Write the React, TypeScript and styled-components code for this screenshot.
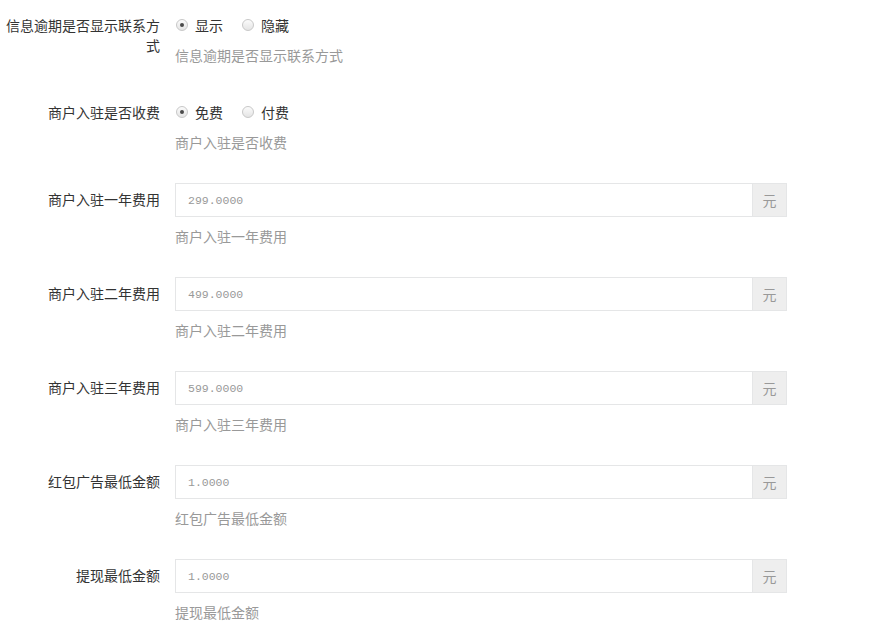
import styled, { createGlobalStyle } from 'styled-components';

type RadioField = {
  kind: 'radio';
  label: string;
  options: string[];
  checked: number;
  help: string;
};

type MoneyField = {
  kind: 'money';
  label: string;
  value: string;
  help: string;
};

type Field = RadioField | MoneyField;

const fields: Field[] = [
  { kind: 'radio', label: '信息逾期是否显示联系方式', options: ['显示', '隐藏'], checked: 0, help: '信息逾期是否显示联系方式' },
  { kind: 'radio', label: '商户入驻是否收费', options: ['免费', '付费'], checked: 0, help: '商户入驻是否收费' },
  { kind: 'money', label: '商户入驻一年费用', value: '299.0000', help: '商户入驻一年费用' },
  { kind: 'money', label: '商户入驻二年费用', value: '499.0000', help: '商户入驻二年费用' },
  { kind: 'money', label: '商户入驻三年费用', value: '599.0000', help: '商户入驻三年费用' },
  { kind: 'money', label: '红包广告最低金额', value: '1.0000', help: '红包广告最低金额' },
  { kind: 'money', label: '提现最低金额', value: '1.0000', help: '提现最低金额' },
];

function App() {
  return (
    <>
      <GlobalStyle />
      <Form>
        {fields.map((field) => (
          <FormRow key={field.label}>
            <Label>{field.label}</Label>
            <Control $gap={field.kind === 'radio' ? 10 : 9}>
              {field.kind === 'radio' ? (
                <RadioGroup>
                  {field.options.map((opt, i) => (
                    <RadioItem key={opt}>
                      <RadioDot $checked={i === field.checked} />
                      {opt}
                    </RadioItem>
                  ))}
                </RadioGroup>
              ) : (
                <InputGroup>
                  <Input type="text" placeholder={field.value} />
                  <Addon>元</Addon>
                </InputGroup>
              )}
              <Help>{field.help}</Help>
            </Control>
          </FormRow>
        ))}
      </Form>
    </>
  );
}

const GlobalStyle = createGlobalStyle`
  body {
    margin: 0;
    background: #fff;
    color: #333;
    font-family: "Noto Sans CJK SC", "Liberation Sans", sans-serif;
    font-size: 14px;
  }
`;

const Form = styled.div`
  display: flex;
  flex-direction: column;
  gap: 30px;
  padding-top: 8px;
`;

const FormRow = styled.div`
  display: flex;
  align-items: flex-start;
  gap: 15px;
`;

const Label = styled.div`
  width: 160px;
  flex-shrink: 0;
  padding-top: 7px;
  text-align: right;
  font-size: 14px;
  line-height: 20px;
  color: #333;
`;

const Control = styled.div<{ $gap: number }>`
  display: flex;
  flex-direction: column;
  gap: ${({ $gap }) => $gap}px;
  width: 612px;
`;

const RadioGroup = styled.div`
  display: flex;
  align-items: center;
  gap: 18px;
  height: 20px;
  padding-top: 7px;
`;

const RadioItem = styled.label`
  display: flex;
  align-items: center;
  gap: 7px;
  font-size: 14px;
  line-height: 20px;
  color: #333;
`;

const RadioDot = styled.span<{ $checked: boolean }>`
  position: relative;
  width: 12px;
  height: 12px;
  margin-left: 1px;
  box-sizing: border-box;
  border: 1px solid #c8c8c8;
  border-radius: 50%;
  background: linear-gradient(#fbfbfb, #e4e4e4);

  &::after {
    content: '';
    display: ${({ $checked }) => ($checked ? 'block' : 'none')};
    position: absolute;
    top: 3px;
    left: 3px;
    width: 4px;
    height: 4px;
    border-radius: 50%;
    background: #4a4a4a;
  }
`;

const InputGroup = styled.div`
  display: flex;
  height: 34px;
  margin-top: 1px;
`;

const Input = styled.input`
  flex: 1;
  min-width: 0;
  height: 34px;
  box-sizing: border-box;
  padding: 0 12px;
  border: 1px solid #e5e6e7;
  border-right: none;
  outline: none;
  font-family: "Liberation Mono", monospace;
  font-size: 11.5px;
  color: #555;

  &::placeholder {
    color: #999;
  }
`;

const Addon = styled.span`
  display: flex;
  align-items: center;
  justify-content: center;
  width: 35px;
  box-sizing: border-box;
  border: 1px solid #e5e6e7;
  background: #eee;
  color: #999;
  font-size: 14px;
`;

const Help = styled.div`
  font-size: 14px;
  line-height: 20px;
  color: #999;
`;

export default App;
